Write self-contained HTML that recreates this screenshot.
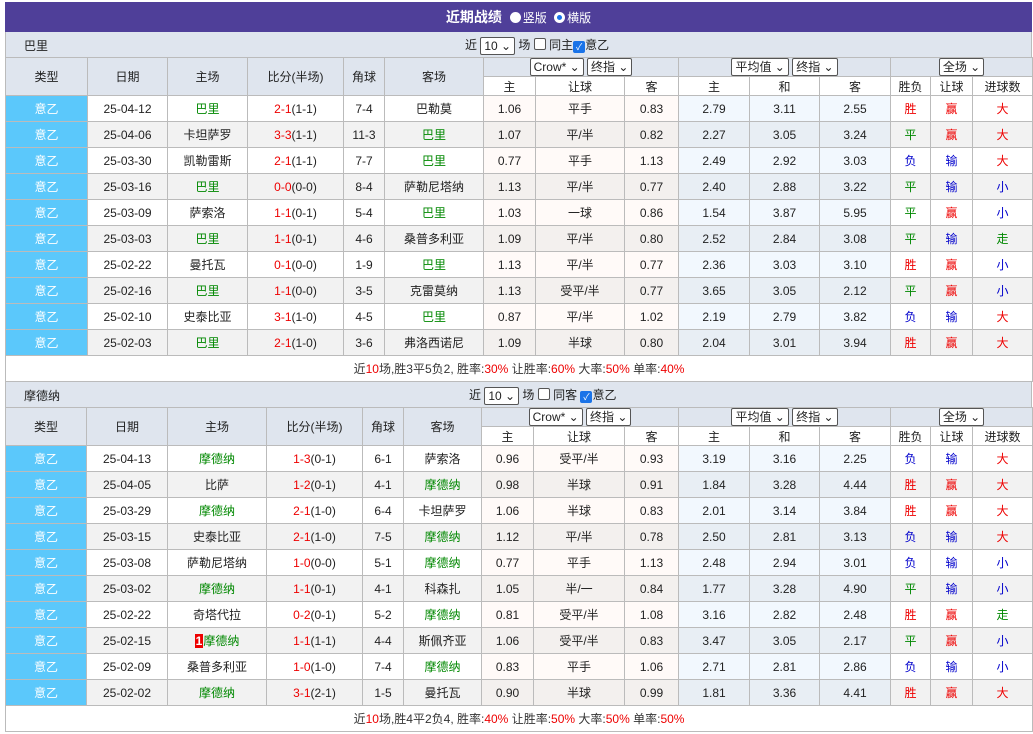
<!DOCTYPE html>
<html><head><meta charset="utf-8"><style>
body{margin:0;background:#fff;font-family:"Liberation Sans Narrow","Liberation Sans","Noto Sans CJK SC",sans-serif;font-size:12px;color:#222;}
.wrap{position:absolute;left:5px;top:2px;width:1027px;}
.bar{height:30px;background:#4f3f99;color:#fff;text-align:center;line-height:30px;font-weight:bold;font-size:14px;font-family:"Liberation Sans","Noto Sans CJK SC",sans-serif;}
.bar span{font-weight:normal;font-size:12px;}
.rad{display:inline-block;width:11px;height:11px;border-radius:50%;background:#fff;vertical-align:-1px;margin:0 2px 0 4px;box-sizing:border-box}
.rad.on{border:3px solid #fff;background:#1a73e8;box-shadow:0 0 0 1px #1a73e8 inset}
.ttl{height:25px;background:#dfe5ee;position:relative;line-height:28px;border-left:1px solid #bbb;border-right:1px solid #bbb}
.ttl b{position:absolute;left:18px;font-weight:normal;font-size:12px}
.ttl .c{position:absolute;top:4px;line-height:18px}
.sel{display:inline-block;border:1px solid #555;background:#fff;height:16px;line-height:16px;padding:0 3px;border-radius:2px;font-size:12px;vertical-align:middle}
.cb{display:inline-block;width:10px;height:10px;border:1px solid #555;border-radius:2px;background:#fff;vertical-align:-1px}
.cb.on{background:#1a73e8;border-color:#1a73e8;color:#fff;font-size:9px;line-height:10px;text-align:center}
table{border-collapse:collapse;table-layout:fixed;width:1027px}
td{border:1px solid #bbb;text-align:center;height:25px;padding:0;white-space:nowrap;overflow:hidden}
tr.h td{background:#dfe5ee;height:18px}
tr.h2 td{background:#fff;height:18px}
td.t{background:#5bc8fb;color:#fff}
tr.g td{background:#f2f2f2}
tr.g td.t{background:#5bc8fb}
td.a{background:#fffaf8}td.b{background:#f2f8fe}
tr.g td.a{background:#f3f0ee}tr.g td.b{background:#e8eef4}
.r{color:#e00}.gr{color:#080}.bl{color:#00c}.gn{color:#080}
.sum td{height:25px;text-align:center;background:#fff;color:#333}
.m{display:inline-block;background:#e00;color:#fff;font-weight:bold;padding:0 1px;line-height:14px}
</style></head><body><div class="wrap">
<div class="bar">近期战绩 <span><i class="rad"></i>竖版 <i class="rad on"></i>横版</span></div>

<div class="ttl"><b>巴里</b><div class="c" style="left:459px">近 <span class="sel">10 ⌄</span> 场 <span class="cb"></span> 同主<span class="cb on">✓</span>意乙</div></div>
<table><colgroup><col style="width:82px"><col style="width:80px"><col style="width:80px"><col style="width:96px"><col style="width:41px"><col style="width:99px"><col style="width:52px"><col style="width:89px"><col style="width:54px"><col style="width:71px"><col style="width:70px"><col style="width:71px"><col style="width:40px"><col style="width:42px"><col style="width:60px"></colgroup>
<tr class="h"><td rowspan="2">类型</td><td rowspan="2">日期</td><td rowspan="2">主场</td><td rowspan="2">比分(半场)</td><td rowspan="2">角球</td><td rowspan="2">客场</td><td colspan="3"><span class="sel">Crow* ⌄</span> <span class="sel">终指 ⌄</span></td><td colspan="3"><span class="sel">平均值 ⌄</span> <span class="sel">终指 ⌄</span></td><td colspan="3"><span class="sel">全场 ⌄</span></td></tr>
<tr class="h2"><td>主</td><td>让球</td><td>客</td><td>主</td><td>和</td><td>客</td><td>胜负</td><td>让球</td><td>进球数</td></tr>
<tr><td class="t">意乙</td><td>25-04-12</td><td class="gn">巴里</td><td><span class="r">2-1</span>(1-1)</td><td>7-4</td><td>巴勒莫</td><td class="a">1.06</td><td class="a">平手</td><td class="a">0.83</td><td class="b">2.79</td><td class="b">3.11</td><td class="b">2.55</td><td class="r">胜</td><td class="r">赢</td><td class="r">大</td></tr>
<tr class="g"><td class="t">意乙</td><td>25-04-06</td><td>卡坦萨罗</td><td><span class="r">3-3</span>(1-1)</td><td>11-3</td><td class="gn">巴里</td><td class="a">1.07</td><td class="a">平/半</td><td class="a">0.82</td><td class="b">2.27</td><td class="b">3.05</td><td class="b">3.24</td><td class="gr">平</td><td class="r">赢</td><td class="r">大</td></tr>
<tr><td class="t">意乙</td><td>25-03-30</td><td>凯勒雷斯</td><td><span class="r">2-1</span>(1-1)</td><td>7-7</td><td class="gn">巴里</td><td class="a">0.77</td><td class="a">平手</td><td class="a">1.13</td><td class="b">2.49</td><td class="b">2.92</td><td class="b">3.03</td><td class="bl">负</td><td class="bl">输</td><td class="r">大</td></tr>
<tr class="g"><td class="t">意乙</td><td>25-03-16</td><td class="gn">巴里</td><td><span class="r">0-0</span>(0-0)</td><td>8-4</td><td>萨勒尼塔纳</td><td class="a">1.13</td><td class="a">平/半</td><td class="a">0.77</td><td class="b">2.40</td><td class="b">2.88</td><td class="b">3.22</td><td class="gr">平</td><td class="bl">输</td><td class="bl">小</td></tr>
<tr><td class="t">意乙</td><td>25-03-09</td><td>萨索洛</td><td><span class="r">1-1</span>(0-1)</td><td>5-4</td><td class="gn">巴里</td><td class="a">1.03</td><td class="a">一球</td><td class="a">0.86</td><td class="b">1.54</td><td class="b">3.87</td><td class="b">5.95</td><td class="gr">平</td><td class="r">赢</td><td class="bl">小</td></tr>
<tr class="g"><td class="t">意乙</td><td>25-03-03</td><td class="gn">巴里</td><td><span class="r">1-1</span>(0-1)</td><td>4-6</td><td>桑普多利亚</td><td class="a">1.09</td><td class="a">平/半</td><td class="a">0.80</td><td class="b">2.52</td><td class="b">2.84</td><td class="b">3.08</td><td class="gr">平</td><td class="bl">输</td><td class="gr">走</td></tr>
<tr><td class="t">意乙</td><td>25-02-22</td><td>曼托瓦</td><td><span class="r">0-1</span>(0-0)</td><td>1-9</td><td class="gn">巴里</td><td class="a">1.13</td><td class="a">平/半</td><td class="a">0.77</td><td class="b">2.36</td><td class="b">3.03</td><td class="b">3.10</td><td class="r">胜</td><td class="r">赢</td><td class="bl">小</td></tr>
<tr class="g"><td class="t">意乙</td><td>25-02-16</td><td class="gn">巴里</td><td><span class="r">1-1</span>(0-0)</td><td>3-5</td><td>克雷莫纳</td><td class="a">1.13</td><td class="a">受平/半</td><td class="a">0.77</td><td class="b">3.65</td><td class="b">3.05</td><td class="b">2.12</td><td class="gr">平</td><td class="r">赢</td><td class="bl">小</td></tr>
<tr><td class="t">意乙</td><td>25-02-10</td><td>史泰比亚</td><td><span class="r">3-1</span>(1-0)</td><td>4-5</td><td class="gn">巴里</td><td class="a">0.87</td><td class="a">平/半</td><td class="a">1.02</td><td class="b">2.19</td><td class="b">2.79</td><td class="b">3.82</td><td class="bl">负</td><td class="bl">输</td><td class="r">大</td></tr>
<tr class="g"><td class="t">意乙</td><td>25-02-03</td><td class="gn">巴里</td><td><span class="r">2-1</span>(1-0)</td><td>3-6</td><td>弗洛西诺尼</td><td class="a">1.09</td><td class="a">半球</td><td class="a">0.80</td><td class="b">2.04</td><td class="b">3.01</td><td class="b">3.94</td><td class="r">胜</td><td class="r">赢</td><td class="r">大</td></tr>
<tr class="sum"><td colspan="15">近<span class="r">10</span>场,胜3平5负2, 胜率:<span class="r">30%</span> 让胜率:<span class="r">60%</span> 大率:<span class="r">50%</span> 单率:<span class="r">40%</span></td></tr>
</table>

<div class="ttl"><b>摩德纳</b><div class="c" style="left:463px">近 <span class="sel">10 ⌄</span> 场 <span class="cb"></span> 同客 <span class="cb on">✓</span>意乙</div></div>
<table><colgroup><col style="width:81px"><col style="width:81px"><col style="width:99px"><col style="width:96px"><col style="width:41px"><col style="width:78px"><col style="width:52px"><col style="width:91px"><col style="width:54px"><col style="width:71px"><col style="width:70px"><col style="width:71px"><col style="width:40px"><col style="width:42px"><col style="width:60px"></colgroup>
<tr class="h"><td rowspan="2">类型</td><td rowspan="2">日期</td><td rowspan="2">主场</td><td rowspan="2">比分(半场)</td><td rowspan="2">角球</td><td rowspan="2">客场</td><td colspan="3"><span class="sel">Crow* ⌄</span> <span class="sel">终指 ⌄</span></td><td colspan="3"><span class="sel">平均值 ⌄</span> <span class="sel">终指 ⌄</span></td><td colspan="3"><span class="sel">全场 ⌄</span></td></tr>
<tr class="h2"><td>主</td><td>让球</td><td>客</td><td>主</td><td>和</td><td>客</td><td>胜负</td><td>让球</td><td>进球数</td></tr>
<tr><td class="t">意乙</td><td>25-04-13</td><td class="gn">摩德纳</td><td><span class="r">1-3</span>(0-1)</td><td>6-1</td><td>萨索洛</td><td class="a">0.96</td><td class="a">受平/半</td><td class="a">0.93</td><td class="b">3.19</td><td class="b">3.16</td><td class="b">2.25</td><td class="bl">负</td><td class="bl">输</td><td class="r">大</td></tr>
<tr class="g"><td class="t">意乙</td><td>25-04-05</td><td>比萨</td><td><span class="r">1-2</span>(0-1)</td><td>4-1</td><td class="gn">摩德纳</td><td class="a">0.98</td><td class="a">半球</td><td class="a">0.91</td><td class="b">1.84</td><td class="b">3.28</td><td class="b">4.44</td><td class="r">胜</td><td class="r">赢</td><td class="r">大</td></tr>
<tr><td class="t">意乙</td><td>25-03-29</td><td class="gn">摩德纳</td><td><span class="r">2-1</span>(1-0)</td><td>6-4</td><td>卡坦萨罗</td><td class="a">1.06</td><td class="a">半球</td><td class="a">0.83</td><td class="b">2.01</td><td class="b">3.14</td><td class="b">3.84</td><td class="r">胜</td><td class="r">赢</td><td class="r">大</td></tr>
<tr class="g"><td class="t">意乙</td><td>25-03-15</td><td>史泰比亚</td><td><span class="r">2-1</span>(1-0)</td><td>7-5</td><td class="gn">摩德纳</td><td class="a">1.12</td><td class="a">平/半</td><td class="a">0.78</td><td class="b">2.50</td><td class="b">2.81</td><td class="b">3.13</td><td class="bl">负</td><td class="bl">输</td><td class="r">大</td></tr>
<tr><td class="t">意乙</td><td>25-03-08</td><td>萨勒尼塔纳</td><td><span class="r">1-0</span>(0-0)</td><td>5-1</td><td class="gn">摩德纳</td><td class="a">0.77</td><td class="a">平手</td><td class="a">1.13</td><td class="b">2.48</td><td class="b">2.94</td><td class="b">3.01</td><td class="bl">负</td><td class="bl">输</td><td class="bl">小</td></tr>
<tr class="g"><td class="t">意乙</td><td>25-03-02</td><td class="gn">摩德纳</td><td><span class="r">1-1</span>(0-1)</td><td>4-1</td><td>科森扎</td><td class="a">1.05</td><td class="a">半/一</td><td class="a">0.84</td><td class="b">1.77</td><td class="b">3.28</td><td class="b">4.90</td><td class="gr">平</td><td class="bl">输</td><td class="bl">小</td></tr>
<tr><td class="t">意乙</td><td>25-02-22</td><td>奇塔代拉</td><td><span class="r">0-2</span>(0-1)</td><td>5-2</td><td class="gn">摩德纳</td><td class="a">0.81</td><td class="a">受平/半</td><td class="a">1.08</td><td class="b">3.16</td><td class="b">2.82</td><td class="b">2.48</td><td class="r">胜</td><td class="r">赢</td><td class="gr">走</td></tr>
<tr class="g"><td class="t">意乙</td><td>25-02-15</td><td class="gn"><span class="m">1</span>摩德纳</td><td><span class="r">1-1</span>(1-1)</td><td>4-4</td><td>斯佩齐亚</td><td class="a">1.06</td><td class="a">受平/半</td><td class="a">0.83</td><td class="b">3.47</td><td class="b">3.05</td><td class="b">2.17</td><td class="gr">平</td><td class="r">赢</td><td class="bl">小</td></tr>
<tr><td class="t">意乙</td><td>25-02-09</td><td>桑普多利亚</td><td><span class="r">1-0</span>(1-0)</td><td>7-4</td><td class="gn">摩德纳</td><td class="a">0.83</td><td class="a">平手</td><td class="a">1.06</td><td class="b">2.71</td><td class="b">2.81</td><td class="b">2.86</td><td class="bl">负</td><td class="bl">输</td><td class="bl">小</td></tr>
<tr class="g"><td class="t">意乙</td><td>25-02-02</td><td class="gn">摩德纳</td><td><span class="r">3-1</span>(2-1)</td><td>1-5</td><td>曼托瓦</td><td class="a">0.90</td><td class="a">半球</td><td class="a">0.99</td><td class="b">1.81</td><td class="b">3.36</td><td class="b">4.41</td><td class="r">胜</td><td class="r">赢</td><td class="r">大</td></tr>
<tr class="sum"><td colspan="15">近<span class="r">10</span>场,胜4平2负4, 胜率:<span class="r">40%</span> 让胜率:<span class="r">50%</span> 大率:<span class="r">50%</span> 单率:<span class="r">50%</span></td></tr>
</table>
</div></body></html>
